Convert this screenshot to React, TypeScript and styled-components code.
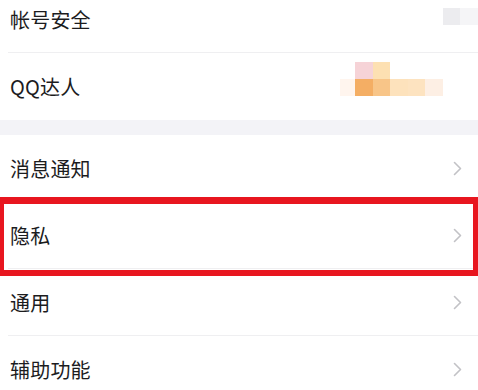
import React from "react";
import styled, { createGlobalStyle } from "styled-components";

const GlobalStyle = createGlobalStyle`
	html, body {
		margin: 0;
		padding: 0;
		background: #ffffff;
		overflow: hidden;
	}
	body {
		font-family: "Noto Sans CJK SC", "Noto Sans", sans-serif;
	}
`;

const Page = styled.div`
	width: 478px;
	height: 390px;
	overflow: hidden;
	background: #ffffff;
`;

// the screenshot is scrolled a little, so the first row is cut at the top
const Scroller = styled.div`
	margin-top: -14px;
	display: flex;
	flex-direction: column;
`;

const Section = styled.div`
	display: flex;
	flex-direction: column;
	background: #ffffff;
`;

const Gap = styled.div`
	height: 15px;
	background: #f3f3f7;
`;

const Row = styled.div<{ $divider?: boolean; $highlight?: boolean }>`
	position: relative;
	height: 67px;
	display: flex;
	align-items: center;
	justify-content: space-between;
	padding: 0 16px 0 10px;
	box-sizing: border-box;

	${(p) =>
		p.$divider &&
		`
		&::before {
			content: "";
			position: absolute;
			left: 8px;
			right: 0;
			bottom: 0;
			height: 1px;
			background: #efeff1;
		}
	`}

	${(p) =>
		p.$highlight &&
		`
		&::after {
			content: "";
			position: absolute;
			left: 0;
			right: 0;
			top: -5px;
			bottom: -7px;
			border-style: solid;
			border-color: #e8161f;
			border-width: 7px 5px 6px 4px;
			pointer-events: none;
		}
	`}
`;

const Label = styled.span`
	font-size: 20px;
	line-height: 1;
	color: #1c1c1e;
	letter-spacing: 0.2px;
`;

const Mosaic = styled.svg<{ $top: number; $right: number }>`
	position: absolute;
	top: ${(p) => p.$top}px;
	right: ${(p) => p.$right}px;
`;

const Chevron = () => (
	<svg width="9" height="15" viewBox="0 0 9 15">
		<polyline
			points="1.5,1.5 7.5,7.5 1.5,13.5"
			fill="none"
			stroke="#c2c2c6"
			strokeWidth="1.6"
			strokeLinecap="round"
			strokeLinejoin="round"
		/>
	</svg>
);

type Item = {
	label: string;
	chevron?: boolean;
	divider?: boolean;
	highlight?: boolean;
	mosaic?: "gray" | "orange";
};

const top: Item[] = [
	{ label: "帐号安全", divider: true, mosaic: "gray" },
	{ label: "QQ达人", mosaic: "orange" },
];

const bottom: Item[] = [
	{ label: "消息通知", chevron: true, divider: true },
	{ label: "隐私", chevron: true, divider: true, highlight: true },
	{ label: "通用", chevron: true, divider: true },
	{ label: "辅助功能", chevron: true },
];

const GrayMosaic = () => (
	<Mosaic $top={22} $right={0} width="35" height="17" viewBox="0 0 35 17">
		<rect x="0" y="0" width="17" height="17" fill="#ececef" />
		<rect x="17" y="0" width="18" height="17" fill="#f5f5f7" />
	</Mosaic>
);

const OrangeMosaic = () => (
	<Mosaic $top={9} $right={35} width="103" height="34" viewBox="0 0 103 34">
		<rect x="15" y="0" width="18" height="17" fill="#f6d3d7" />
		<rect x="33" y="0" width="17" height="17" fill="#fde0b2" />
		<rect x="0" y="17" width="15" height="17" fill="#fff5ee" />
		<rect x="15" y="17" width="18" height="17" fill="#f4ae64" />
		<rect x="33" y="17" width="17" height="17" fill="#f8c588" />
		<rect x="50" y="17" width="18" height="17" fill="#fde2bc" />
		<rect x="68" y="17" width="17" height="17" fill="#fde3c0" />
		<rect x="85" y="17" width="18" height="17" fill="#fdefe4" />
	</Mosaic>
);

const SettingRow = ({ item }: { item: Item }) => (
	<Row $divider={item.divider} $highlight={item.highlight}>
		<Label>{item.label}</Label>
		{item.mosaic === "gray" ? <GrayMosaic /> : null}
		{item.mosaic === "orange" ? <OrangeMosaic /> : null}
		{item.chevron ? <Chevron /> : null}
	</Row>
);

export default function App() {
	return (
		<Page>
			<GlobalStyle />
			<Scroller>
				<Section>
					{top.map((item) => (
						<SettingRow item={item} key={item.label} />
					))}
				</Section>
				<Gap />
				<Section>
					{bottom.map((item) => (
						<SettingRow item={item} key={item.label} />
					))}
				</Section>
			</Scroller>
		</Page>
	);
}
